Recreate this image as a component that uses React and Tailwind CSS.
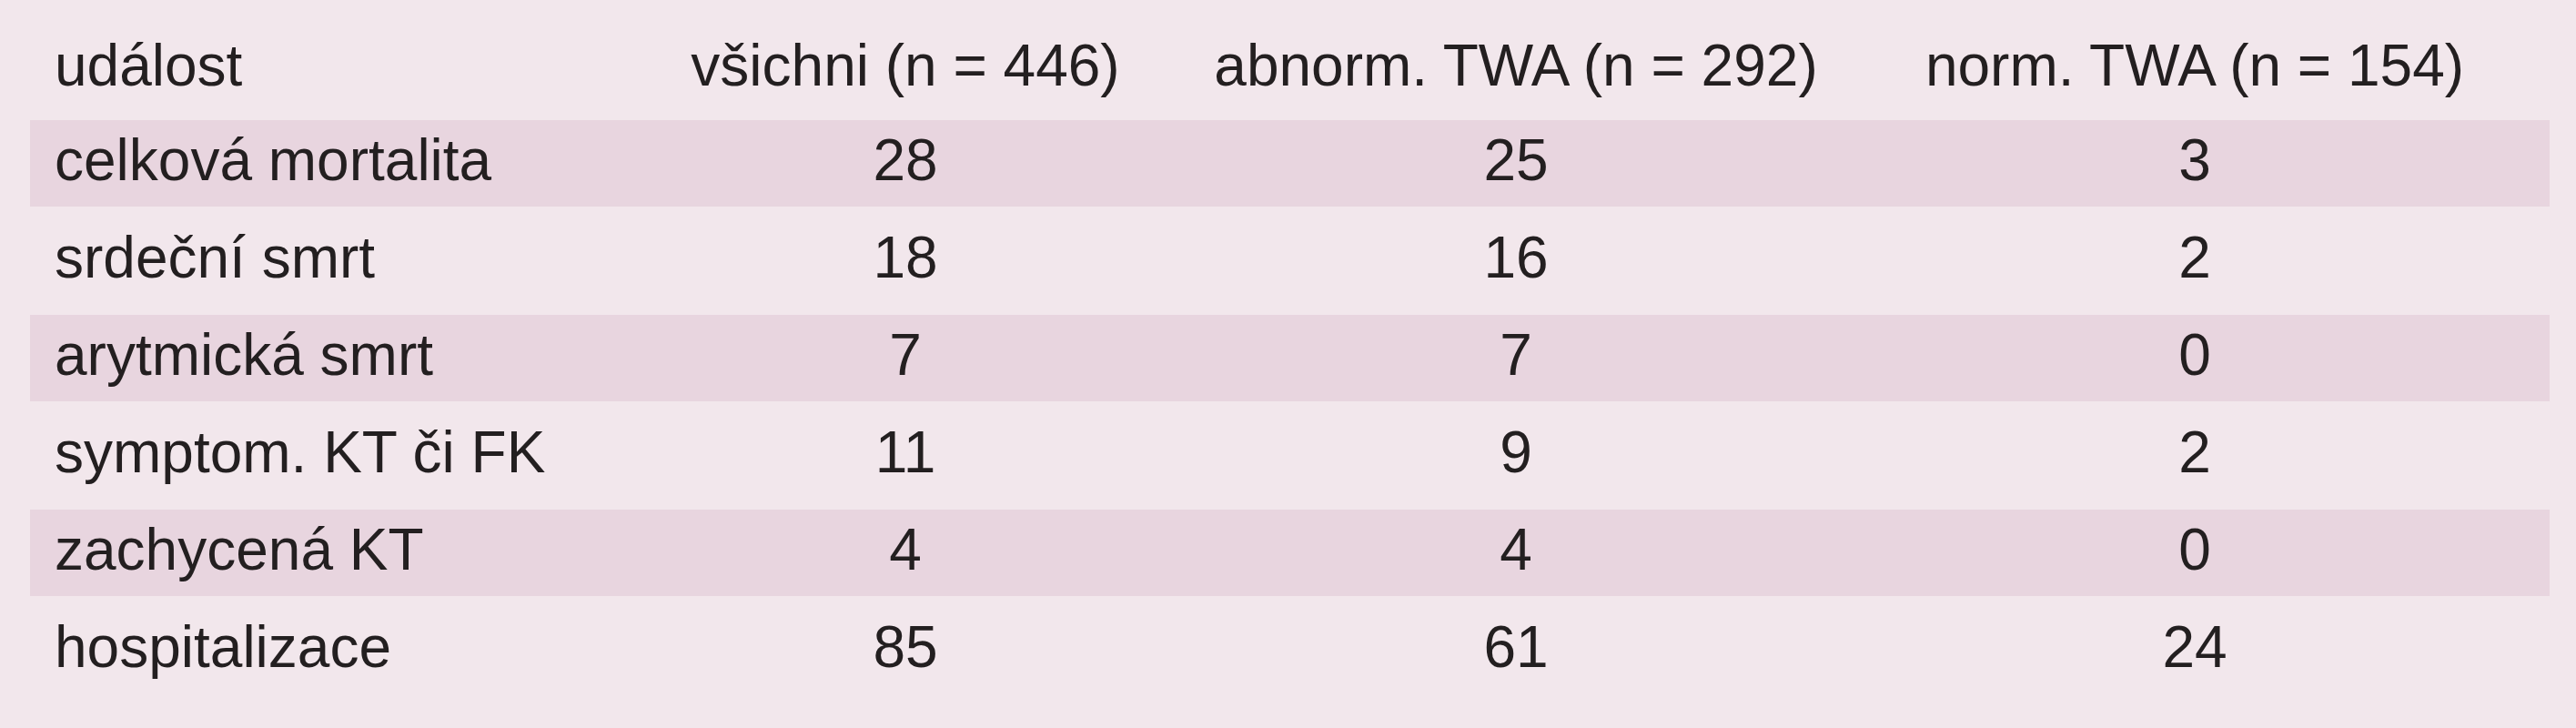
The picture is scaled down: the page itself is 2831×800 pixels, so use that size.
import React from 'react'

const rows = [
  ['celková mortalita', '28', '25', '3'],
  ['srdeční smrt', '18', '16', '2'],
  ['arytmická smrt', '7', '7', '0'],
  ['symptom. KT či FK', '11', '9', '2'],
  ['zachycená KT', '4', '4', '0'],
  ['hospitalizace', '85', '61', '24'],
]

export default function App() {
  return (
    <div className="w-[2831px] h-[800px] overflow-hidden bg-[#f2e7ec] px-[33px] pt-[25px] font-['Liberation_Sans',Arial,sans-serif] text-[64px] leading-none text-[#231f20]">
      <div className="flex flex-col gap-[12px] w-[2769px]">
        <div className="grid grid-cols-[697px_530px_812px_680px_1fr] h-[95px] pt-[15px]">
          <div className="pl-[27px]">událost</div>
          <div className="text-center whitespace-nowrap">všichni (n = 446)</div>
          <div className="text-center whitespace-nowrap">abnorm. TWA (n = 292)</div>
          <div className="text-center whitespace-nowrap">norm. TWA (n = 154)</div>
          <div />
        </div>
        {rows.map((r, i) => (
          <div
            key={r[0]}
            className={
              'grid grid-cols-[697px_530px_812px_680px_1fr] h-[95px] pt-[12px] ' +
              (i % 2 === 0 ? 'bg-[#e8d5df]' : '')
            }
          >
            <div className="pl-[27px] whitespace-nowrap">{r[0]}</div>
            <div className="text-center">{r[1]}</div>
            <div className="text-center">{r[2]}</div>
            <div className="text-center">{r[3]}</div>
            <div />
          </div>
        ))}
      </div>
    </div>
  )
}
